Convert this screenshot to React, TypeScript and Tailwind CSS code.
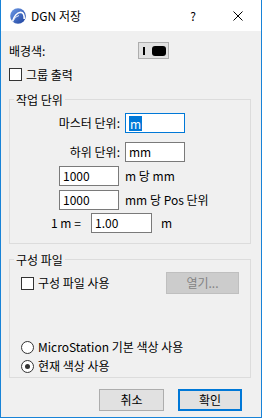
import React from "react";

function AppIcon() {
  return (
    <svg width="16" height="16" viewBox="0 0 16 16" className="ml-[9px] shrink-0">
      <defs>
        <linearGradient id="ic" x1="0" y1="0" x2="1" y2="1">
          <stop offset="0" stopColor="#6f9ce8" />
          <stop offset="1" stopColor="#1b3f9c" />
        </linearGradient>
      </defs>
      <circle cx="8" cy="8" r="7.8" fill="url(#ic)" />
      <path d="M2.5 13.5 Q5 5 10.5 4.2 Q14.5 4.5 14.2 11" fill="none" stroke="#fff" strokeWidth="1.6" />
      <path d="M2.5 13.5 Q5.5 8 9 7.5" fill="none" stroke="#dfe8fa" strokeWidth="1" />
    </svg>
  );
}

function CheckBox() {
  return <div className="w-[13px] h-[13px] border border-[#333] bg-white shrink-0" />;
}

function Radio({ on }: { on?: boolean }) {
  return (
    <div className="w-[13px] h-[13px] rounded-full border border-[#333] bg-white flex items-center justify-center shrink-0">
      {on && <div className="w-[5px] h-[5px] rounded-full bg-[#333]" />}
    </div>
  );
}

function Field({ w, children, focus }: { w: string; children: React.ReactNode; focus?: boolean }) {
  return (
    <div
      className={`${w} h-[20px] bg-white border flex items-center pl-[3px] ${
        focus ? "border-[#0078d7]" : "border-[#7a7a7a]"
      }`}
    >
      {children}
    </div>
  );
}

export default function App() {
  return (
    <div className="w-[262px] h-[418px] bg-[#f0f0f0] border-x border-b border-[#1883d7] flex flex-col text-[12px] leading-[16px] text-black font-['Noto_Sans_CJK_KR',sans-serif]">
      {/* Title bar */}
      <div className="h-[31px] bg-white flex items-center shrink-0">
        <AppIcon />
        <span className="ml-[5px]">DGN 저장</span>
        <span className="ml-auto">?</span>
        <svg width="10" height="10" viewBox="0 0 10 10" className="ml-[37px] mr-[18px]">
          <path d="M0.5 0.5 L9.5 9.5 M9.5 0.5 L0.5 9.5" stroke="#000" strokeWidth="1" />
        </svg>
      </div>

      {/* Background color */}
      <div className="mt-[11px] h-[17px] flex items-center pl-[8px]">
        <span className="w-[129px]">배경색:</span>
        <div className="w-[31px] h-[17px] border border-[#adadad] bg-[#e1e1e1] flex items-center pl-[4px]">
          <div className="w-[2px] h-[8px] bg-black" />
          <div className="ml-[7px] w-[14px] h-[10px] rounded-[3px] bg-black" />
        </div>
      </div>

      {/* Group output */}
      <div className="mt-[9px] h-[13px] flex items-center pl-[8px] gap-[4px]">
        <CheckBox />
        <span>그룹 출력</span>
      </div>

      {/* Working units */}
      <fieldset className="mt-[10px] ml-[8px] w-[242px] border border-[#dcdcdc] pb-[10px]">
        <legend className="ml-[4px] px-[2px] leading-[17px]">작업 단위</legend>
        <div className="mt-[5px] flex items-center">
          <span className="w-[110px] text-right">마스터 단위:</span>
          <div className="ml-[5px]">
            <Field w="w-[60px]" focus>
              <span className="bg-[#0078d7] text-white px-[1px] leading-[15px]">m</span>
            </Field>
          </div>
        </div>
        <div className="mt-[9px] flex items-center">
          <span className="w-[110px] text-right">하위 단위:</span>
          <div className="ml-[5px]">
            <Field w="w-[60px]">mm</Field>
          </div>
        </div>
        <div className="mt-[4px] flex items-center">
          <div className="ml-[49px]">
            <Field w="w-[60px]">1000</Field>
          </div>
          <span className="ml-[6px]">m 당 mm</span>
        </div>
        <div className="mt-[4px] flex items-center">
          <div className="ml-[49px]">
            <Field w="w-[60px]">1000</Field>
          </div>
          <span className="ml-[6px]">mm 당 Pos 단위</span>
        </div>
        <div className="mt-[3px] flex items-center">
          <span className="ml-[41px] w-[40px]">1 m =</span>
          <Field w="w-[61px]">1.00</Field>
          <span className="ml-[9px]">m</span>
        </div>
      </fieldset>

      {/* Config file */}
      <fieldset className="mt-[7px] ml-[8px] w-[242px] border border-[#dcdcdc] pb-[3px]">
        <legend className="ml-[4px] px-[2px] leading-[17px]">구성 파일</legend>
        <div className="mt-[4px] flex items-center pl-[11px]">
          <CheckBox />
          <span className="ml-[4px]">구성 파일 사용</span>
          <div className="ml-auto mr-[11px] w-[73px] h-[22px] border border-[#bfbfbf] bg-[#cccccc] text-[#838383] flex items-center justify-center">
            열기...
          </div>
        </div>
        <div className="mt-[45px] h-[16px] flex items-center pl-[11px]">
          <Radio />
          <span className="ml-[4px]">MicroStation 기본 색상 사용</span>
        </div>
        <div className="mt-[3px] h-[16px] flex items-center pl-[11px]">
          <Radio on />
          <span className="ml-[4px]">현재 색상 사용</span>
        </div>
      </fieldset>

      {/* Buttons */}
      <div className="mt-[11px] flex justify-end pr-[19px]">
        <div className="w-[65px] h-[22px] border border-[#adadad] bg-[#e1e1e1] flex items-center justify-center">
          취소
        </div>
        <div className="ml-[14px] w-[64px] h-[22px] border-2 border-[#0078d7] bg-[#e1e1e1] flex items-center justify-center">
          확인
        </div>
      </div>
    </div>
  );
}
